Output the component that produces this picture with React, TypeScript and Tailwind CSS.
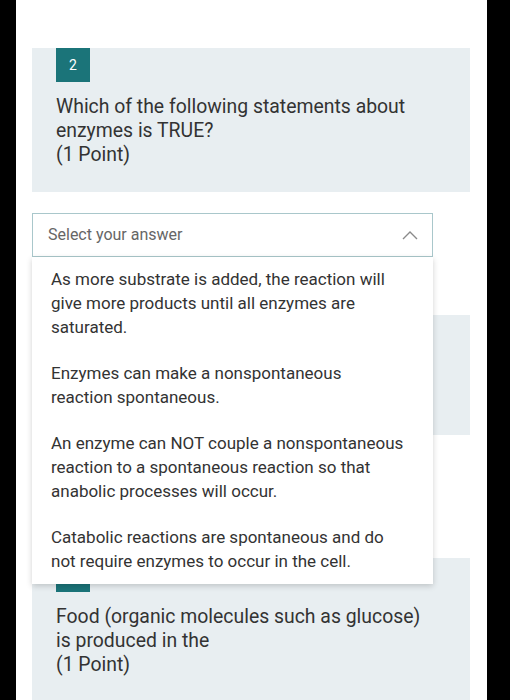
import React from "react";

const font = { fontFamily: "Roboto, 'Noto Sans', Arial, sans-serif" };

function Card({ n, lines }: { n?: string; lines: string[] }) {
  return (
    <div className="bg-[#e8eef1] pl-6 pr-2 pb-[25px]">
      <div className="w-[34px] h-[34px] bg-[#1b7479] text-white text-[14px] flex items-center justify-center">
        {n}
      </div>
      <div className="mt-[13px] text-[19.4px] leading-[24px] text-[#333333] whitespace-nowrap">
        {lines.map((l, i) => (
          <div key={i} className="h-[24px]">{l}</div>
        ))}
      </div>
    </div>
  );
}

function SelectBox({ open, label = "Select your answer" }: { open?: boolean; label?: string }) {
  return (
    <div className="mt-[21px] w-[401px] h-[44px] border border-[#a9c7cb] bg-white flex items-center justify-between pl-[15px] pr-[14px]">
      <span className="text-[16px] text-[#666666]">{label}</span>
      <svg width="16" height="9" viewBox="0 0 16 9" fill="none">
        {open ? (
          <path d="M1 8 L8 1 L15 8" stroke="#8a8a8a" strokeWidth="1.4" />
        ) : (
          <path d="M1 1 L8 8 L15 1" stroke="#8a8a8a" strokeWidth="1.4" />
        )}
      </svg>
    </div>
  );
}

const options = [
  ["As more substrate is added, the reaction will", "give more products until all enzymes are", "saturated."],
  ["Enzymes can make a nonspontaneous", "reaction spontaneous."],
  ["An enzyme can NOT couple a nonspontaneous", "reaction to a spontaneous reaction so that", "anabolic processes will occur."],
  ["Catabolic reactions are spontaneous and do", "not require enzymes to occur in the cell."],
];

export default function App() {
  return (
    <div className="w-[510px] h-[700px] bg-black overflow-hidden" style={font}>
      <div className="ml-4 w-[471px] h-[700px] bg-white pt-12 pl-4 pr-[17px]">
        <Card n="2" lines={["Which of the following statements about", "enzymes is TRUE?", "(1 Point)"]} />
        <div className="relative">
          <SelectBox open />
          <div className="absolute left-0 top-[44px] w-[401px] bg-white shadow-[0_2px_6px_rgba(0,0,0,0.18)] z-10">
            {options.map((o, i) => (
              <div key={i} className={`px-[19px] ${i === 0 ? "pt-[10px] pb-[11px]" : "py-[11px]"} text-[17px] leading-[24px] text-[#333333] whitespace-nowrap`}>
                {o.map((l, j) => (
                  <div key={j}>{l}</div>
                ))}
              </div>
            ))}
          </div>
        </div>
        <div className="mt-[58px]">
          <Card lines={["", ""]} />
        </div>
        <SelectBox label="" />
        <div className="mt-[58px]">
          <Card lines={["Food (organic molecules such as glucose)", "is produced in the", "(1 Point)"]} />
        </div>
      </div>
    </div>
  );
}
